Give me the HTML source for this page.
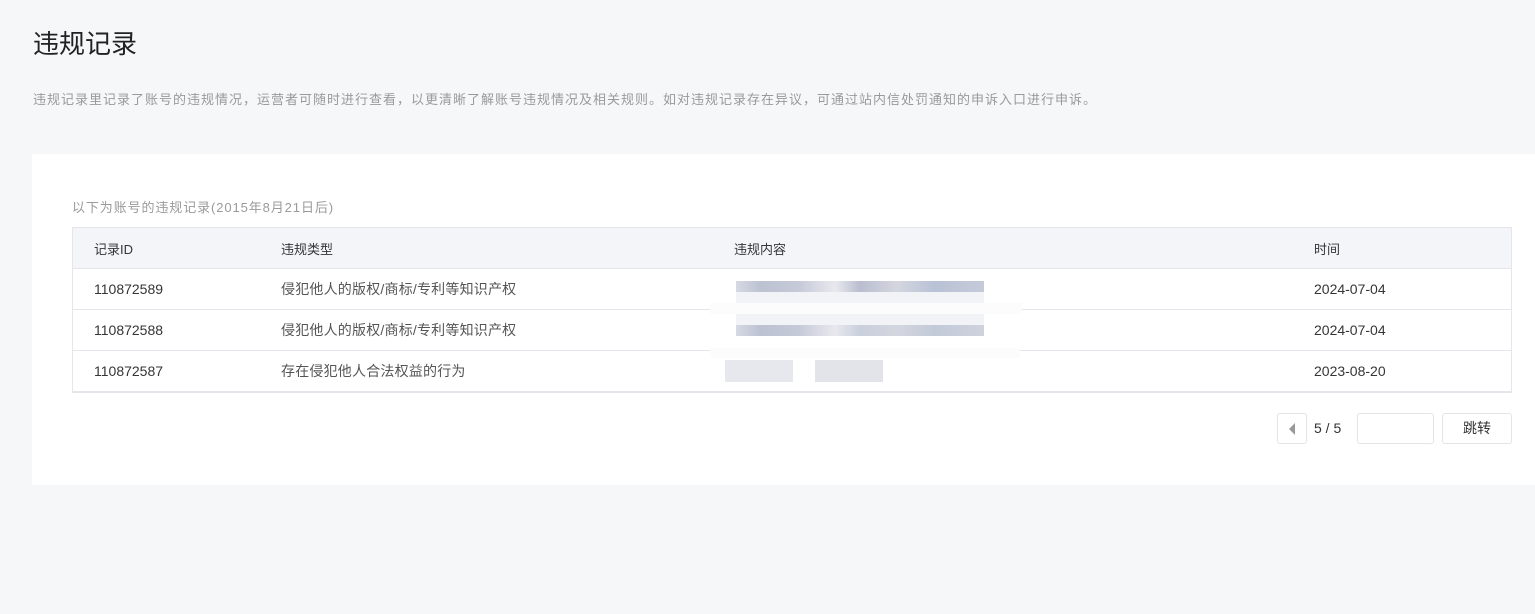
<!DOCTYPE html>
<html><head><meta charset="utf-8"><style>
*{margin:0;padding:0;box-sizing:border-box}
body{width:1535px;height:614px;background:#f6f7f9;font-family:"Liberation Sans","Noto Sans CJK SC",sans-serif;position:relative;overflow:hidden;color:#333}
.a{position:absolute;white-space:nowrap}
h1{position:absolute;left:33px;top:24px;font-size:26px;font-weight:normal;color:#222}
.desc{left:33px;top:89px;font-size:13px;color:#9a9a9a;letter-spacing:1px}
.card{position:absolute;left:32px;top:154px;width:1503px;height:331px;background:#fff}
.cap{left:72px;top:197px;font-size:13px;color:#9a9a9a;letter-spacing:0.9px}
table{position:absolute;left:72px;top:227px;width:1440px;border-collapse:collapse;font-size:14px;color:#353535}
td{height:41px;border:1px solid #e4e6eb;border-left:none;border-right:none;padding:0}
tr:first-child td{background:#f4f5f9;font-size:13px}
td.t{color:#555;letter-spacing:0.2px}
.tb{position:absolute;left:72px;top:227px;width:1440px;height:166px;border:1px solid #e4e6eb}
.blur{position:absolute;height:11px}
.btn{position:absolute;border:1px solid #e4e4e4;border-radius:3px;background:#fff}
</style></head><body>
<h1>违规记录</h1>
<div class="a desc">违规记录里记录了账号的违规情况，运营者可随时进行查看，以更清晰了解账号违规情况及相关规则。如对违规记录存在异议，可通过站内信处罚通知的申诉入口进行申诉。</div>
<div class="card"></div>
<div class="a cap">以下为账号的违规记录(2015年8月21日后)</div>
<table>
<tr><td style="width:209px;padding-left:22px">记录ID</td><td style="width:453px">违规类型</td><td style="width:580px">违规内容</td><td>时间</td></tr>
<tr><td style="padding-left:22px">110872589</td><td class="t">侵犯他人的版权/商标/专利等知识产权</td><td></td><td>2024-07-04</td></tr>
<tr><td style="padding-left:22px">110872588</td><td class="t">侵犯他人的版权/商标/专利等知识产权</td><td></td><td>2024-07-04</td></tr>
<tr><td style="padding-left:22px">110872587</td><td class="t">存在侵犯他人合法权益的行为</td><td></td><td>2023-08-20</td></tr>
</table>
<div class="tb"></div>
<div class="blur" style="left:736px;top:281px;width:248px;background:linear-gradient(90deg,#d6d9e3,#bcc2d2 10%,#c5c9d8 25%,#e8e9ee 40%,#b9bdcf 50%,#d4d6df 65%,#b8c2d6 80%,#c5cad8)"></div>
<div class="blur" style="left:736px;top:292px;width:248px;background:#f2f3f6"></div>
<div class="a" style="left:710px;top:303px;width:312px;height:11px;background:#fcfcfc"></div>
<div class="blur" style="left:736px;top:314px;width:248px;background:#f2f3f6"></div>
<div class="blur" style="left:736px;top:325px;width:248px;background:linear-gradient(90deg,#d6d9e3,#bcc2d2 10%,#c5c9d8 25%,#e8e9ee 40%,#c9cfdc 50%,#d4d6df 65%,#c2cad8 80%,#cfd2dd)"></div>
<div class="a" style="left:710px;top:348px;width:310px;height:10px;background:#fcfcfc"></div>
<div class="blur" style="left:725px;top:360px;width:68px;height:22px;background:#e6e8ee"></div>
<div class="blur" style="left:815px;top:360px;width:68px;height:22px;background:#e3e3ea"></div>
<div class="btn" style="left:1277px;top:413px;width:30px;height:31px"></div>
<div class="a" style="left:1289px;top:423px;width:0;height:0;border-top:6px solid transparent;border-bottom:6px solid transparent;border-right:6px solid #999"></div>
<div class="a" style="left:1314px;top:420px;font-size:14px">5 / 5</div>
<div class="btn" style="left:1357px;top:413px;width:77px;height:31px"></div>
<div class="btn" style="left:1442px;top:413px;width:70px;height:31px;text-align:center;line-height:29px;font-size:14px">跳转</div>
</body></html>
